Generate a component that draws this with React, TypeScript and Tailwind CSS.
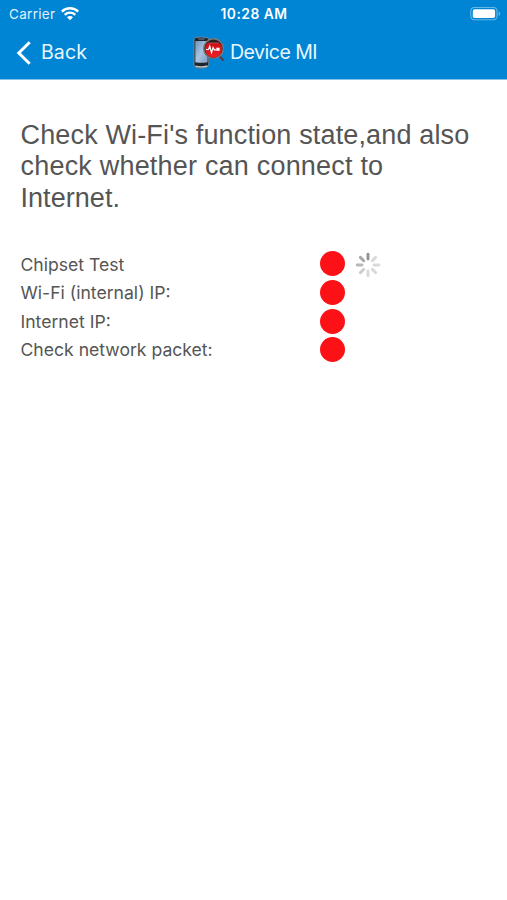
const headingLines = [
  { text: "Check Wi-Fi's function state,and also", spacing: 'tracking-[0.15px]' },
  { text: 'check whether can connect to', spacing: 'tracking-[0.2px]' },
  { text: 'Internet.', spacing: 'tracking-[0.05px]' },
];

const rows = [
  { label: 'Chipset Test', height: 'h-[29px]', shift: 'pt-[2px]', busy: true },
  { label: 'Wi-Fi (internal) IP:', height: 'h-[29px]', shift: 'pt-px', busy: false },
  { label: 'Internet IP:', height: 'h-[28px]', shift: 'pt-[2px]', busy: false },
  { label: 'Check network packet:', height: 'h-[29px]', shift: 'pt-px', busy: false },
];

const spokes = ['#929292', '#d9d9d9', '#d9d9d9', '#d9d9d9', '#d9d9d9', '#cdcdcd', '#b8b8b8', '#a6a6a6'];

function Spinner() {
  return (
    <svg className="ml-[10px] mt-[2px] h-[26px] w-[26px] shrink-0" viewBox="-13 -13 26 26">
      {spokes.map((color, i) => (
        <line key={i} x1="0" y1="-6" x2="0" y2="-10.8" stroke={color} strokeWidth="2.9" strokeLinecap="round" transform={`rotate(${i * 45})`} />
      ))}
    </svg>
  );
}

function WifiIcon() {
  return (
    <svg className="ml-[6px] h-[14px] w-[18px]" viewBox="0 0 18 14" fill="none" stroke="#fff">
      <path d="M0.8 4.6C5.4 0.2 12.6 0.2 17.2 4.6" strokeWidth="2.5" />
      <path d="M3.7 7.8C6.7 5 11.3 5 14.3 7.8" strokeWidth="2.3" />
      <path d="M9 13.2 6 10.2C7.6 8.7 10.4 8.7 12 10.2Z" fill="#fff" stroke="none" />
    </svg>
  );
}

function BatteryIcon() {
  return (
    <svg className="h-[14px] w-[31px]" viewBox="0 0 31 14">
      <rect x="0.8" y="0.4" width="26.2" height="12.4" rx="3.6" fill="none" stroke="#66b6e6" strokeWidth="1.1" />
      <rect x="2.8" y="2.3" width="22.3" height="8.7" rx="1.8" fill="#fff" />
      <path d="M28.6 4.4c2.2.8 2.2 3.6 0 4.4z" fill="#66b6e6" />
    </svg>
  );
}

function AppLogo() {
  return (
    <svg className="h-[34px] w-[33px]" viewBox="0 0 33 34">
      <defs>
        <linearGradient id="screen" x1="0" y1="0" x2="1" y2="1">
          <stop offset="0" stopColor="#6f93b8" />
          <stop offset="0.5" stopColor="#a9c4e0" />
          <stop offset="1" stopColor="#7f9fc2" />
        </linearGradient>
        <linearGradient id="lens" x1="0" y1="0" x2="0" y2="1">
          <stop offset="0" stopColor="#c70f14" />
          <stop offset="1" stopColor="#ee2026" />
        </linearGradient>
      </defs>
      <path d="M3.4 1.7Q9.5.1 15.4 1.9q1.3.4 1.3 2v24.1q0 2.6-2.4 3.4-5.4 1.5-10.2.3-2-.5-2-2.7V3.8q0-1.7 1.3-2.1Z" fill="#1d242c" stroke="#8e979f" strokeWidth="0.7" />
      <path d="M3.3 4.9h12.3v21.3q-6 1.2-12.3 0Z" fill="url(#screen)" />
      <path d="M3.4 30.2q5.8 1.5 12-.2" stroke="#c3c7ca" strokeWidth="1.5" fill="none" />
      <path d="M6.5 3h6" stroke="#9ba6b0" strokeWidth="0.8" />
      <path d="m27.3 20 3.7 4" stroke="#5e3c45" strokeWidth="2.1" strokeLinecap="round" />
      <circle cx="21.5" cy="12.6" r="9.8" fill="#2a2226" stroke="#7d7779" strokeWidth="1.4" />
      <path d="M12.9 12.8C13.1 10.2 14.2 8.1 15.4 6.9H27.6C29.4 8.4 30.2 10.4 30.2 12.8a8.6 8.6 0 0 1-17.3 0Z" fill="url(#lens)" />
      <path d="M16.5 7h10.3" stroke="#e65c5f" strokeWidth="0.7" />
      <path d="M14 13.5h2.5l1.3-3.3 1.7 6.4 1.6-5 1.2 2.3h2" fill="none" stroke="#fff" strokeWidth="1.2" />
      <rect x="24.3" y="11.7" width="3.3" height="3.1" fill="#fff" />
    </svg>
  );
}

export default function App() {
  return (
    <div className="flex h-[900px] w-[507px] flex-col overflow-hidden bg-white font-['Inter',sans-serif]">
      <header className="h-[80px] border-b border-[#82c2ea] bg-[#0085d4] text-white">
        <div className="grid h-[28px] grid-cols-3 items-center pl-[9px] pr-[6px] text-[13px]">
          <div className="flex items-center">
            <span className="pt-px text-[13.5px] tracking-[0.3px] text-[#e0f2ff]">Carrier</span>
            <WifiIcon />
          </div>
          <div className="pr-[2px] text-center text-[13.8px] font-semibold tracking-[0.5px]">10:28 AM</div>
          <div className="flex justify-end"><BatteryIcon /></div>
        </div>
        <div className="flex h-[49px] items-center text-[19.5px] text-[#e9f7ff]">
          <button className="flex w-[192px] items-center pl-[16px]">
            <svg className="mr-[9px] h-[24px] w-[16px]" viewBox="0 0 16 24" fill="none" stroke="#fff" strokeWidth="3">
              <path d="M13.7 1.2 2.8 12 13.7 22.8" />
            </svg>
            <span className="pt-px tracking-[0.1px]">Back</span>
          </button>
          <AppLogo />
          <span className="ml-[5px] whitespace-nowrap pt-px tracking-[-0.5px]">Device MI</span>
        </div>
      </header>
      <main className="px-[20.5px] pt-[40px] text-[#555]">
        <h1 className="font-['Liberation_Sans',sans-serif] text-[27px] leading-[31.3px]">
          {headingLines.map((line) => (
            <span key={line.text} className={`block whitespace-nowrap ${line.spacing}`}>{line.text}</span>
          ))}
        </h1>
        <div className="mt-[35.6px]">
          {rows.map((row) => (
            <div key={row.label} className={`flex items-center ${row.height}`}>
              <span className={`w-[299px] whitespace-nowrap text-[17.6px] ${row.shift}`}>{row.label}</span>
              <span className="h-[25px] w-[25px] shrink-0 rounded-full bg-[#fb1116]" />
              {row.busy && <Spinner />}
            </div>
          ))}
        </div>
      </main>
    </div>
  );
}
